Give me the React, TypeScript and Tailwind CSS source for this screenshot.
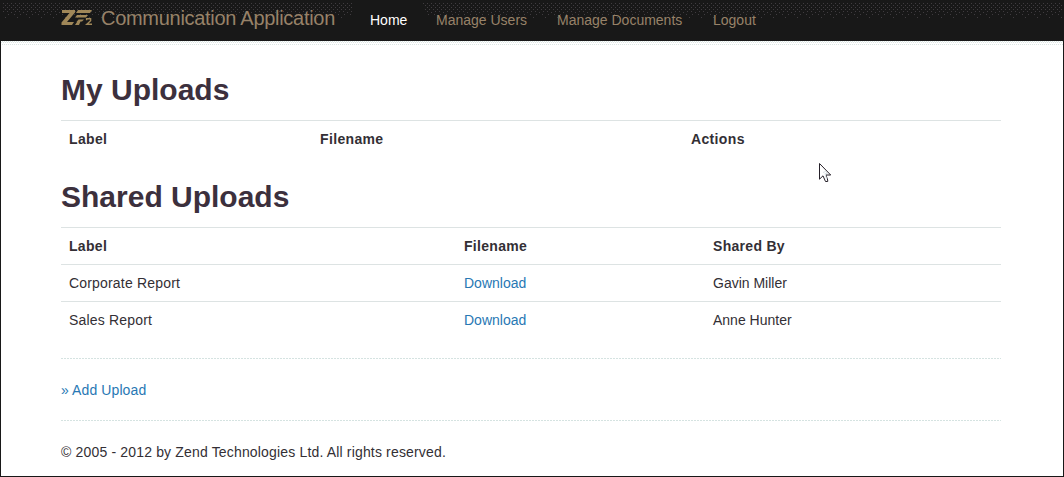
import React from "react";

const navItems = [
  { label: "Manage Users", className: "w-[121px]" },
  { label: "Manage Documents", className: "w-[156px]" },
  { label: "Logout", className: "w-[74px]" },
];

const shared = [
  { label: "Corporate Report", by: "Gavin Miller" },
  { label: "Sales Report", by: "Anne Hunter" },
];

function NavTexture() {
  return (
    <svg width="1064" height="46" shapeRendering="crispEdges" aria-hidden="true">
      <defs>
        <pattern id="nav-grain" width="12" height="24" patternUnits="userSpaceOnUse">
          <path
            fill="#403c40"
            d="M3 3h1v1h-1zM7 3h1v1h-1zM11 3h1v1h-1zM1 5h1v1h-1zM5 5h1v1h-1zM9 5h1v1h-1zM3 7h1v1h-1zM7 7h1v1h-1zM11 7h1v1h-1zM1 9h1v1h-1zM5 9h1v1h-1zM9 9h1v1h-1zM3 11h1v1h-1zM7 11h1v1h-1zM11 12h1v1h-1zM2 14h1v1h-1zM8 14h1v1h-1zM5 17h1v1h-1z"
          />
        </pattern>
        <pattern id="shade-grain" y="41" width="2" height="4" patternUnits="userSpaceOnUse">
          <path fill="#dce6e4" d="M0 0h1v1h-1zM1 1h1v1h-1zM0 3h1v1h-1z" />
        </pattern>
      </defs>
      <path fill="url(#nav-grain)" d="M3 3H354L350 18H3zM423 3H1062V18H427z" />
      <path fill="url(#shade-grain)" d="M1 41H1063V45H1z" />
    </svg>
  );
}

function Logo() {
  return (
    <svg className="mt-[9px] shrink-0" width="32" height="18" viewBox="0 0 32 18" aria-hidden="true">
      <path fill="#a08758" d="M1 1H14V3.5L6 13H13L11 16H0.5V13.5L8.5 4H1zM17 1H31L29 4H15zM16 6H27L25 8.5H14zM17.5 10.5H23L21 12.5H19.5L18 16H14L16 13H15.5z" />
      <path fill="none" stroke="#a08758" strokeWidth="1.4" d="M25.6 11.2V9.7H29.6V11.7L25.8 15.2H31" />
    </svg>
  );
}

function Cursor() {
  return (
    <svg className="absolute left-[818px] top-[163px]" width="13" height="20" viewBox="0 0 13 20" aria-hidden="true">
      <path d="M.5.5V16.2L4 12.8L6.5 18.5H8.7V17L6.9 12H11.7z" fill="#fff" stroke="#252029" strokeWidth="1" />
      <path d="M4 9.5L6.5 8.5L8.5 10.5H6L7.5 16" fill="none" stroke="#dce4e7" />
    </svg>
  );
}

function Divider() {
  return <hr className="mb-[21px] mt-5 h-px border-0 bg-[repeating-linear-gradient(90deg,#d5e3e1_0_2px,#ffffff_2px_3px)]" />;
}

function Heading({ children }: { children: React.ReactNode }) {
  return <h2 className="mb-[10px] text-[30px] font-bold leading-[39px] pb-px text-[#3c303d]">{children}</h2>;
}

export default function App() {
  return (
    <div className="relative h-[477px] w-[1064px] overflow-hidden border-x border-b border-[#181818] bg-white font-['Liberation_Sans',Arial,sans-serif] text-[14px] leading-5 text-[#332f35]">
      <header className="relative -mx-px flex h-[41px] bg-[#181818] pl-[61px] text-[#978268]">
        <div className="pointer-events-none absolute left-0 top-0"><NavTexture /></div>
        <div className="relative flex">
          <Logo />
          <a href="#" className="ml-2 block w-[254px] whitespace-nowrap text-[20px] leading-[36px] tracking-[-0.29px]">Communication Application</a>
        </div>
        <nav className="relative flex leading-[40px]">
          <a href="#" className="ml-[15px] w-[66px] text-white">Home</a>
          {navItems.map((item) => (
            <a key={item.label} href="#" className={`${item.className} whitespace-nowrap`}>{item.label}</a>
          ))}
        </nav>
      </header>

      <main className="ml-[60px] w-[940px] pt-[29px]">
        <Heading>My Uploads</Heading>
        <table className="mb-[19px] w-full table-fixed border-collapse text-left">
          <colgroup><col className="w-[251px]" /><col className="w-[371px]" /><col /></colgroup>
          <thead>
            <tr className="h-[37px] border-t border-[#dde3e3] tracking-[0.35px]">
              <th className="px-2">Label</th><th className="px-2">Filename</th><th className="px-2">Actions</th>
            </tr>
          </thead>
        </table>
        <Heading>Shared Uploads</Heading>
        <table className="w-full table-fixed border-collapse text-left">
          <colgroup><col className="w-[395px]" /><col className="w-[249px]" /><col /></colgroup>
          <thead>
            <tr className="h-[37px] border-t border-[#dde3e3] tracking-[0.3px]">
              <th className="px-2">Label</th><th className="px-2">Filename</th><th className="px-2">Shared By</th>
            </tr>
          </thead>
          <tbody>
            {shared.map((row) => (
              <tr key={row.label} className="h-[37px] border-t border-[#dde3e3]">
                <td className="px-2 tracking-[0.18px]">{row.label}</td>
                <td className="px-2"><a href="#" className="text-[#2878b4]">Download</a></td>
                <td className="px-2">{row.by}</td>
              </tr>
            ))}
          </tbody>
        </table>
        <Divider />
        <p><a href="#" className="tracking-[0.1px] text-[#2878b4]">» Add Upload</a></p>
        <Divider />
        <footer className="tracking-[0.165px]">© 2005 - 2012 by Zend Technologies Ltd. All rights reserved.</footer>
      </main>
      <Cursor />
    </div>
  );
}
